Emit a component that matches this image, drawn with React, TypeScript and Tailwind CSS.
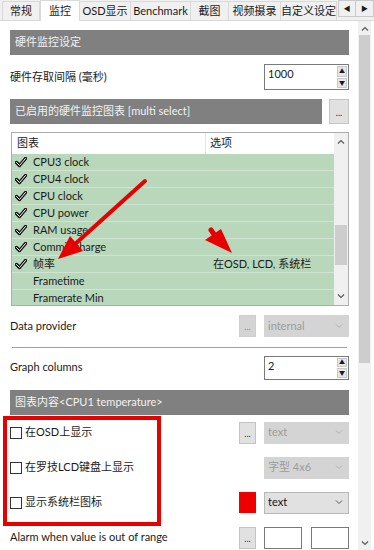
import { ReactNode } from "react";

const font = { fontFamily: 'Lato, "Noto Sans CJK SC", sans-serif' };

const tabs = [
  { label: "常规", w: "w-[38px] border-l" },
  { label: "监控", w: "w-[40px]" },
  { label: "OSD显示", w: "w-[51px]" },
  { label: "Benchmark", w: "w-[60px]" },
  { label: "截图", w: "w-[38px]" },
  { label: "视频摄录", w: "w-[52px]" },
  { label: "自定义设定", w: "w-[56px]" },
];

const rows = [
  { name: "CPU3 clock", checked: true, opt: "" },
  { name: "CPU4 clock", checked: true, opt: "" },
  { name: "CPU clock", checked: true, opt: "" },
  { name: "CPU power", checked: true, opt: "" },
  { name: "RAM usage", checked: true, opt: "" },
  { name: "Commit charge", checked: true, opt: "" },
  { name: "帧率", checked: true, opt: "在OSD, LCD, 系统栏" },
  { name: "Frametime", checked: false, opt: "" },
  { name: "Framerate Min", checked: false, opt: "" },
];

const Check = () => (
  <svg width="12" height="11" viewBox="0 0 12 11">
    <path d="M1.5 5.5 L4.5 8.5 L10.5 1.5" fill="none" stroke="#111" strokeWidth="3.4" strokeLinejoin="round" strokeLinecap="round" />
    <path d="M1.5 5.5 L4.5 8.5 L10.5 1.5" fill="none" stroke="#fff" strokeWidth="1" strokeLinejoin="round" strokeLinecap="round" />
  </svg>
);

const Chevron = ({ up }: { up?: boolean }) => (
  <svg width="8" height="5" viewBox="0 0 8 5">
    <path d={up ? "M1 4.5 L4 1.5 L7 4.5" : "M1 0.5 L4 3.5 L7 0.5"} fill="none" stroke="#555" strokeWidth="1.1" />
  </svg>
);

const Header = ({ children }: { children: ReactNode }) => (
  <div className="h-[25px] bg-[#808080] text-[#f2f2f2] text-[11px] flex items-center pl-[5px] whitespace-nowrap">{children}</div>
);

const Dots = ({ disabled }: { disabled?: boolean }) => (
  <div
    className={`w-[17px] h-[22px] flex items-end justify-center pb-[5px] text-[9px] leading-none border ${
      disabled ? "bg-[#d4d4d4] border-[#cfcfcf] text-[#8a8a8a]" : "bg-[#e1e1e1] border-[#c4c4c4] text-[#333]"
    }`}
  >
    ...
  </div>
);

const Spinner = ({ value, h }: { value: string; h: string }) => (
  <div className={`w-[85px] ${h} border border-[#7a7a7a] bg-white flex`}>
    <div className="flex-1 pl-[3px] text-[11px] leading-[18px]">{value}</div>
    <div className="w-[11px] flex flex-col gap-[1px] p-[1px] pl-0">
      <div className="flex-1 bg-[#e6e6e6] border border-[#c9c9c9] flex items-center justify-center text-[6px] leading-none">▲</div>
      <div className="flex-1 bg-[#e6e6e6] border border-[#c9c9c9] flex items-center justify-center text-[6px] leading-none">▼</div>
    </div>
  </div>
);

const Select = ({ value, disabled }: { value: string; disabled?: boolean }) => (
  <div
    className={`w-[85px] h-[22px] flex items-center justify-between pl-[3px] pr-[5px] text-[11px] border ${
      disabled ? "bg-[#d4d4d4] border-[#d4d4d4] text-[#9c9c9c]" : "bg-[#e1e1e1] border-[#b8b8b8] text-[#111]"
    }`}
  >
    <span>{value}</span>
    <svg width="8" height="5" viewBox="0 0 8 5">
      <path d="M1 0.5 L4 3.5 L7 0.5" fill="none" stroke={disabled ? "#b0b0b0" : "#555"} strokeWidth="1" />
    </svg>
  </div>
);

const Box = () => <div className="w-[12px] h-[12px] border border-[#333] bg-white mr-[3px]" />;

export default function App() {
  return (
    <div className="w-[374px] h-[550px] overflow-hidden bg-white relative text-[#1a1a1a]" style={font}>
      {/* tab strip */}
      <div className="h-[21px] bg-[#f0f0f0] flex items-end border-b border-[#d9d9d9] relative">
        <div className="w-[2px]" />
        {tabs.map((t, i) => (
          <div
            key={t.label}
            className={`text-[11px] flex items-center justify-center whitespace-nowrap ${t.w} ${
              i === 1
                ? "h-[21px] bg-white border border-b-0 border-[#d9d9d9] -mb-[1px]"
                : "h-[19px] border-t border-r border-[#d9d9d9]"
            }`}
          >
            {t.label}
          </div>
        ))}
        <div className="flex ml-[1px] mb-[3px] border border-[#c9c9c9]">
          <div className="w-[17px] h-[15px] bg-[#f0f0f0] border-r border-[#c9c9c9] flex items-center justify-center text-[7px]">◀</div>
          <div className="w-[17px] h-[15px] bg-[#f0f0f0] flex items-center justify-center text-[7px]">▶</div>
        </div>
      </div>

      <div className="flex">
        {/* page body */}
        <div className="w-[358px] pl-[10px] pr-[9px] pt-[9px]">
          <Header>硬件监控设定</Header>
          <div className="h-[44px] flex items-center justify-between text-[11px]">
            <span>硬件存取间隔 (毫秒)</span>
            <Spinner value="1000" h="h-[26px]" />
          </div>
          <div className="flex justify-between">
            <div className="w-[312px]">
              <Header>已启用的硬件监控图表 [multi select]</Header>
            </div>
            <div className="w-[20px] h-[25px] bg-[#e1e1e1] border border-[#c4c4c4] flex items-end justify-center pb-[6px] text-[9px] leading-none">
              ...
            </div>
          </div>

          {/* chart list */}
          <div className="mt-[8px] h-[174px] border border-[#adadad] flex overflow-hidden ml-[1px]">
            <div className="flex-1 overflow-hidden">
              <div className="h-[21px] bg-white flex text-[11px] items-center">
                <div className="w-[194px] pl-[5px] border-r border-[#e5e5e5] h-full flex items-center">图表</div>
                <div className="pl-[4px]">选项</div>
              </div>
              {rows.map((r) => (
                <div key={r.name} className="h-[17px] bg-[#b8d7bb] border-b border-[#cfe4d1] flex items-center text-[11px]">
                  <div className="w-[21px] pl-[3px] flex items-center">{r.checked && <Check />}</div>
                  <div className="w-[180px]">{r.name}</div>
                  <div>{r.opt}</div>
                </div>
              ))}
            </div>
            <div className="w-[14px] bg-[#f0f0f0] flex flex-col">
              <div className="h-[17px] flex items-center justify-center">
                <Chevron up />
              </div>
              <div className="h-[75px]" />
              <div className="h-[40px] bg-[#cdcdcd] mx-[1px]" />
              <div className="flex-1" />
              <div className="h-[17px] flex items-center justify-center">
                <Chevron />
              </div>
            </div>
          </div>

          <div className="h-[40px] flex items-center justify-between text-[11px]">
            <span>Data provider</span>
            <div className="flex gap-[8px] items-center">
              <Dots disabled />
              <Select value="internal" disabled />
            </div>
          </div>
          <div className="h-px bg-[#a0a0a0] mx-[2px] mt-[1px]" />
          <div className="h-[39px] flex items-center justify-between text-[11px]">
            <span>Graph columns</span>
            <Spinner value="2" h="h-[24px]" />
          </div>
          <div className="mt-[3px]">
            <Header>图表内容&lt;CPU1 temperature&gt;</Header>
          </div>

          <div className="h-[35px] flex items-center justify-between text-[11px]">
            <div className="flex items-center">
              <Box />
              在OSD上显示
            </div>
            <div className="flex gap-[8px] items-center">
              <Dots />
              <Select value="text" disabled />
            </div>
          </div>
          <div className="h-[35px] flex items-center justify-between text-[11px]">
            <div className="flex items-center">
              <Box />
              在罗技LCD键盘上显示
            </div>
            <Select value="字型 4x6" disabled />
          </div>
          <div className="h-[35px] flex items-center justify-between text-[11px]">
            <div className="flex items-center">
              <Box />
              显示系统栏图标
            </div>
            <div className="flex gap-[8px] items-center">
              <div className="w-[17px] h-[21px] bg-[#ee0000]" />
              <Select value="text" />
            </div>
          </div>
          <div className="h-[35px] flex items-center justify-between text-[11px]">
            <span>Alarm when value is out of range</span>
            <div className="flex gap-[8px] items-center">
              <Dots />
              <div className="flex gap-[9px]">
                <div className="w-[38px] h-[22px] border border-[#7a7a7a] bg-white" />
                <div className="w-[38px] h-[22px] border border-[#7a7a7a] bg-white" />
              </div>
            </div>
          </div>
        </div>

        {/* outer scrollbar */}
        <div className="w-[13px] h-[529px] bg-[#f0f0f0] flex flex-col">
          <div className="h-[14px] flex items-center justify-center">
            <Chevron up />
          </div>
          <div className="h-[328px] bg-[#cdcdcd] mx-[1px]" />
          <div className="flex-1" />
          <div className="h-[14px] flex items-center justify-center">
            <Chevron />
          </div>
        </div>
      </div>

      {/* annotations */}
      <div className="absolute left-[3px] top-[416px] w-[158px] h-[110px] border-[4px] border-[#e60000] pointer-events-none" />
      <svg className="absolute left-0 top-0 pointer-events-none" width="374" height="550">
        <line x1="145" y1="181" x2="74" y2="245" stroke="#e60000" strokeWidth="4" strokeLinecap="round" />
        <polygon points="58,259 70,236 83,251" fill="#e60000" />
        <line x1="211" y1="230" x2="216" y2="237" stroke="#e60000" strokeWidth="5" strokeLinecap="round" />
        <polygon points="232,253 205,240 221,229" fill="#e60000" />
      </svg>
    </div>
  );
}
